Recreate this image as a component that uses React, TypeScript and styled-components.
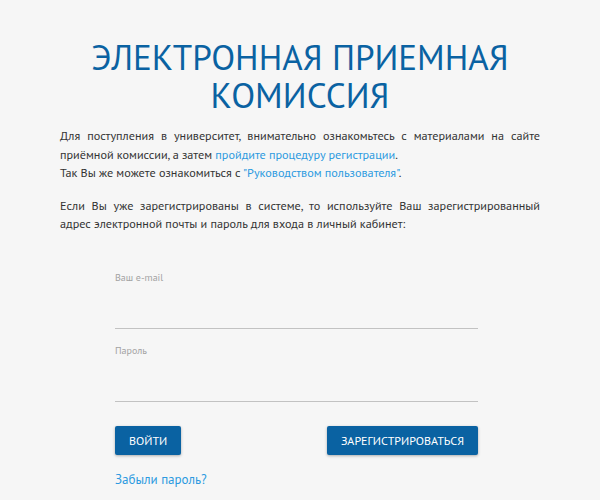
import React from "react";
import styled, { createGlobalStyle } from "styled-components";

const GlobalStyle = createGlobalStyle`
  html, body {
    margin: 0;
    padding: 0;
    background: #f6f6f6;
  }
  body {
    font-family: "PT Sans", "Roboto Condensed", Roboto, sans-serif;
  }
`;

const Page = styled.div`
  width: 600px;
  height: 500px;
  overflow: hidden;
  background: #f6f6f6;
  padding: 38px 60px 0;
  box-sizing: border-box;
`;

const Title = styled.h1`
  margin: 0;
  text-align: center;
  color: #0a62a2;
  font-size: 35px;
  font-weight: 400;
  line-height: 38px;
`;

const Text = styled.p`
  margin: 13px 0 0;
  color: #333;
  font-size: 12.2px;
  line-height: 18.5px;
  text-align: justify;
  & + & {
    margin-top: 14px;
  }
`;

const Link = styled.a`
  color: #2c9ae0;
  text-decoration: none;
`;

const Form = styled.form`
  width: 363px;
  margin: 37px 0 0 55px;
  display: flex;
  flex-direction: column;
`;

const Field = styled.label`
  display: flex;
  flex-direction: column;
  & + & {
    margin-top: 15px;
  }
`;

const FieldLabel = styled.span`
  color: #a2a2a2;
  font-size: 10px;
  line-height: 14px;
`;

const Input = styled.input`
  border: none;
  border-bottom: 1px solid #c2c2c2;
  background: transparent;
  height: 43px;
  padding: 0;
  outline: none;
  font-size: 13px;
`;

const Buttons = styled.div`
  display: flex;
  justify-content: space-between;
  margin-top: 24px;
`;

const Button = styled.button`
  height: 29px;
  padding: 0 14px;
  border: none;
  border-radius: 2px;
  background: #0a62a2;
  color: #fff;
  font-family: inherit;
  font-size: 12px;
  text-transform: uppercase;
  box-shadow: 0 1px 3px rgba(0, 0, 0, 0.3);
`;

const Forgot = styled(Link)`
  margin-top: 17px;
  align-self: flex-start;
  font-size: 13px;
  line-height: 15px;
`;

export default function App() {
  return (
    <Page>
      <GlobalStyle />
      <Title>
        ЭЛЕКТРОННАЯ ПРИЕМНАЯ
        <br />
        КОМИССИЯ
      </Title>
      <Text>
        Для поступления в университет, внимательно ознакомьтесь с материалами на сайте
        приёмной комиссии, а затем <Link href="#">пройдите процедуру регистрации</Link>.
        <br />
        Так Вы же можете ознакомиться с <Link href="#">"Руководством пользователя"</Link>.
      </Text>
      <Text>
        Если Вы уже зарегистрированы в системе, то используйте Ваш зарегистрированный
        адрес электронной почты и пароль для входа в личный кабинет:
      </Text>
      <Form onSubmit={(e) => e.preventDefault()}>
        <Field>
          <FieldLabel>Ваш e-mail</FieldLabel>
          <Input type="email" />
        </Field>
        <Field>
          <FieldLabel>Пароль</FieldLabel>
          <Input type="password" />
        </Field>
        <Buttons>
          <Button type="submit">Войти</Button>
          <Button type="button">Зарегистрироваться</Button>
        </Buttons>
        <Forgot href="#">Забыли пароль?</Forgot>
      </Form>
    </Page>
  );
}
